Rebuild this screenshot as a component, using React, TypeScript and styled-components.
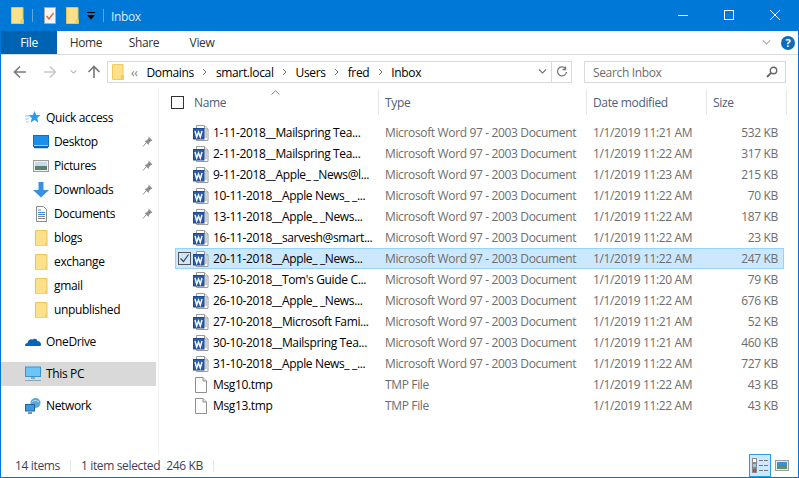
import React from "react";
import styled, { createGlobalStyle } from "styled-components";

const Global = createGlobalStyle`
  html, body { margin: 0; padding: 0; background: #fff; overflow: hidden; }
  * { box-sizing: border-box; }
`;
const Win = styled.div`
  width: 799px; height: 478px; display: flex; flex-direction: column;
  border: 1px solid #0078d7; border-top: 0; background: #fff; overflow: hidden;
  font-family: "Open Sans", "Noto Sans", sans-serif; font-size: 12px; color: #000;
  letter-spacing: -0.35px;
`;
const TitleBar = styled.div`
  height: 31px; margin: 0 -1px; background: #0078d7; display: flex; align-items: center; padding-left: 11px; flex: none;
`;
const TitleSep = styled.span`width: 1px; height: 13px; background: #5aa7e4; margin-left: 8px;`;
const TitleText = styled.span`color: #dcecf9; margin-left: 7px; margin-top: 2px; flex: 1; font-size: 12px;`;
const Qat = styled.span<{ $ml: number }>`display: inline-flex; margin-left: ${p => p.$ml}px;`;
const WinBtn = styled.span`width: 46px; height: 31px; display: flex; align-items: center; justify-content: center;`;
const Controls = styled.div`display: flex; margin-right: 1px; margin-top: -1px;`;

const Ribbon = styled.div`
  height: 24px; flex: none; border-bottom: 1px solid #dadbdc; display: flex; align-items: stretch; position: relative;
`;
const FileTab = styled.div`
  width: 56px; background: #0063b1; color: #fff; display: flex; align-items: center; justify-content: center; height: 23px;
`;
const RTab = styled.div`width: 58px; display: flex; align-items: center; justify-content: center; color: #333;`;
const RibbonRight = styled.div`margin-left: auto; display: flex; align-items: center; gap: 10px; padding-right: 3px;`;
const Help = styled.span`
  width: 14px; height: 14px; border-radius: 50%; background: #0f6cbd; color: #fff; font-weight: 700; font-size: 11px;
  display: flex; align-items: center; justify-content: center; letter-spacing: 0;
`;

const Nav = styled.div`height: 33px; flex: none; display: flex; align-items: flex-start; padding-top: 6px;`;
const NavBtns = styled.div`width: 106px; height: 22px; display: flex; align-items: center; padding-left: 12px;`;
const NavGap = styled.span<{ $w: number }>`display: inline-flex; margin-right: ${p => p.$w}px;`;
const Address = styled.div`
  width: 465px; height: 22px; border: 1px solid #d9d9d9; display: flex; align-items: center; padding-left: 4px;
`;
const Crumb = styled.span`margin-left: 6px; margin-right: 6px;`;
const Back = styled.span`color: #777; margin-left: 7px; margin-right: 3px;`;
const CrumbSep = styled.span`display: inline-flex; margin: 0 2.5px;`;
const AddrEnd = styled.div`margin-left: auto; display: flex; align-items: center; height: 100%;`;
const AddrDown = styled.span`display: flex; width: 14px; justify-content: center; margin-right: 2px;`;
const Refresh = styled.span`width: 20px; height: 100%; border-left: 1px solid #d9d9d9; display: flex; align-items: center; justify-content: center;`;
const Search = styled.div`
  width: 202px; height: 22px; margin-left: 12px; border: 1px solid #d9d9d9; display: flex; align-items: center;
  justify-content: space-between; padding: 0 7px 0 8px; color: #6d6d6d;
`;

const Body = styled.div`flex: 1; min-height: 0; display: flex;`;
const Side = styled.nav`
  width: 158px; flex: none; border-right: 1px solid #f0f0f0; padding-top: 18px; display: flex; flex-direction: column;
`;
const SideItem = styled.div<{ $level?: number; $active?: boolean; $gap?: boolean }>`
  height: 24px; flex: none; width: 155px; display: flex; align-items: center; position: relative;
  padding-left: ${p => (p.$level === 2 ? 32 : 24)}px; padding-bottom: 1px;
  margin-top: ${p => (p.$gap ? 8 : 0)}px;
  background: ${p => (p.$active ? "#d9d9d9" : "transparent")};
`;
const SideIcon = styled.span`width: 16px; height: 16px; display: inline-flex; margin-right: 5px; flex: none;`;
const Pin = styled.span`position: absolute; right: 3px; top: 6px; display: flex;`;

const Main = styled.main`flex: 1; min-width: 0; display: flex; flex-direction: column;`;
const Head = styled.div`
  height: 28px; flex: none; margin-left: 6px; display: grid; grid-template-columns: 214px 208px 120px 80px; padding-top: 2px; margin-bottom: 6px;
`;
const HeadCell = styled.div`
  height: 25px; border-right: 1px solid #e5e5e5; display: flex; align-items: center; padding-left: 6px; color: #4c607a; position: relative;
`;
const Caret = styled.span`position: absolute; left: 106px; top: 0; display: flex;`;
const Box = styled.span<{ $dark?: boolean }>`
  width: 13px; height: 13px; flex: none; border: 1px solid ${p => (p.$dark ? "#333" : "#555")}; display: flex; align-items: center; justify-content: center;
`;
const HeadLabel = styled.span`margin-left: 10px;`;
const Rows = styled.div`margin-left: 16px; width: 609px;`;
const Row = styled.div<{ $sel?: boolean }>`
  height: 21px; display: grid; grid-template-columns: 204px 208px 120px 77px; align-items: center;
  background: ${p => (p.$sel ? "#cce8ff" : "transparent")};
  box-shadow: ${p => (p.$sel ? "inset 0 0 0 1px #99d1ff" : "none")};
`;
const NameCell = styled.div`display: flex; align-items: center; padding-left: 3px; white-space: nowrap;`;
const Check = styled.span`width: 15px; flex: none; display: flex;`;
const FileIcon = styled.span`width: 16px; height: 16px; flex: none; display: flex; margin-right: 4px;`;
const Cell = styled.div`padding-left: 6px; color: #6d6d6d; white-space: nowrap;`;
const SizeCell = styled(Cell)`text-align: right; padding-right: 6px;`;

const Status = styled.footer`height: 23px; flex: none; display: flex; align-items: center; position: relative; padding-left: 14px; color: #3d3d5c;`;
const StatusSep = styled.span`width: 1px; height: 12px; background: #e6e6e6; margin: 0 10px;`;
const StatusGap = styled.span`margin-left: 6px;`;
const ViewBtns = styled.div`margin-left: auto; display: flex; align-items: center; height: 100%; padding-right: 9px;`;
const ViewOn = styled.span`width: 22px; height: 23px; background: #cce8ff; border: 1px solid #26a0da; display: flex; align-items: center; justify-content: center; margin-right: 4px;`;

const Folder = ({ w = 13, h = 17 }: { w?: number; h?: number }) => (
  <svg width={w} height={h} viewBox="0 0 13 17">
    <path d="M.5.5h11.5v16H.5z" fill="#fde08a" stroke="#eac54f" />
    <path d="M10 12.5h2.5v4H10z" fill="#f5d25e" stroke="#eac54f" strokeWidth=".7" />
  </svg>
);
const SideFolder = () => (
  <svg width="16" height="16" viewBox="0 0 16 16">
    <path d="M2.5.5h11.5v15.5H2.5z" fill="#fde08a" stroke="#eac54f" />
    <path d="M12 12.5h2v3.5h-2z" fill="#f5d25e" />
  </svg>
);
const Word = () => (
  <svg width="16" height="16" viewBox="0 0 16 16">
    <path d="M3.5.5h8l3.5 3.500v11.500h-11.500z" fill="#fff" stroke="#9a9a9a" />
    <path d="M11.500.5v3.500h3.500" fill="#eee" stroke="#9a9a9a" />
    <path d="M11.500 6h2.500M11.500 8h2.500M11.500 10h2.500M11.500 12h2.500" stroke="#9a9a9a" />
    <rect x="0.500" y="3.500" width="10.500" height="10.500" fill="#2a5ca8" stroke="#1c4a92" />
    <path d="M2 6l1.700 6 1.800-5 1.800 5L9 6" fill="none" stroke="#fff" strokeWidth="1.400" />
  </svg>
);
const Tmp = () => (
  <svg width="16" height="16" viewBox="0 0 16 16">
    <path d="M2.500.5h7.500l3.500 3.500v11.500h-11z" fill="#fdfdfd" stroke="#8f8f8f" />
    <path d="M10 .5v3.500h3.500" fill="#e8e8e8" stroke="#8f8f8f" />
  </svg>
);
const Tick = ({ s = 11, c = "#444" }: { s?: number; c?: string }) => (
  <svg width={s} height={s} viewBox="0 0 11 11"><path d="M1.500 5.500l3 3 5-7" fill="none" stroke={c} strokeWidth="1.200" /></svg>
);
const PinIcon = () => (
  <svg width="11" height="11" viewBox="0 0 11 11">
    <path d="M6.500.5l4 4-1.500.5-2 2-.5 2L2.500 5l2-.5 2-2z" fill="#8c8c8c" />
    <path d="M4 7l-3 3.500" stroke="#8c8c8c" />
  </svg>
);
const Arrow = ({ c, rot = 0 }: { c: string; rot?: number }) => (
  <svg width="14" height="14" viewBox="0 0 14 14" style={{ transform: `rotate(${rot}deg)` }}>
    <path d="M13 7H2M7 1.500L1.500 7 7 12.500" fill="none" stroke={c} strokeWidth="1.600" />
  </svg>
);
const Chevron = ({ c = "#777", w = 8 }: { c?: string; w?: number }) => (
  <svg width={w} height={w * 0.6} viewBox="0 0 10 6"><path d="M1 .5l4 4 4-4" fill="none" stroke={c} strokeWidth="1.300" /></svg>
);
const CrumbArrow = () => (
  <CrumbSep><svg width="5" height="8" viewBox="0 0 5 8"><path d="M1 1l3 3-3 3" fill="none" stroke="#777" /></svg></CrumbSep>
);

const Star = () => (
  <svg width="16" height="16" viewBox="0 0 16 16">
    <path d="M9.500 1l1.700 4 4.300.3-3.300 2.800 1.100 4.400-3.800-2.400-3.800 2.400 1.100-4.400L3.500 5.300 7.800 5z" fill="#2f9be8" />
    <path d="M0 6h4M.5 9h3M1.500 12h2" stroke="#7cc3f3" />
  </svg>
);
const Desktop = () => (
  <svg width="16" height="14" viewBox="0 0 16 14" style={{ marginTop: 1 }}>
    <rect x=".5" y=".5" width="15" height="11" fill="#1b90e6" stroke="#0f6fc0" />
    <path d="M1 12.500h14" stroke="#0b5fa8" strokeWidth="1.500" />
    <path d="M1 10.500h14" stroke="#8fd0fa" />
  </svg>
);
const Pict = () => (
  <svg width="16" height="12" viewBox="0 0 16 12" style={{ marginTop: 2 }}>
    <rect x=".5" y=".5" width="15" height="11" fill="#eef3f6" stroke="#9b9b9b" />
    <rect x="2" y="2" width="12" height="4" fill="#c6dbe8" />
    <rect x="2" y="6" width="12" height="4" fill="#5d7f6d" />
  </svg>
);
const Down = () => (
  <svg width="16" height="16" viewBox="0 0 16 16"><path d="M5.500 0h5v8H16l-8 7.500L0 8h5.500z" fill="#3b8fe0" /></svg>
);
const Docs = () => (
  <svg width="16" height="16" viewBox="0 0 16 16">
    <path d="M3.500.5h7l3 3v12h-10z" fill="#fff" stroke="#8a8a8a" />
    <path d="M5 4h3M5 6.500h7M5 8.500h7" stroke="#3b8fe0" />
    <path d="M5 10.500h7M5 12.500h7" stroke="#888" />
  </svg>
);
const Cloud = () => (
  <svg width="16" height="16" viewBox="0 0 16 16"><path d="M0 12c0-2 1-3 2.500-3C3 6 5.500 4.500 7.500 5.500 9 4 12 4.500 12.500 7c2 0 3.500 1.500 3.500 3.500 0 1-.5 1.500-1.500 1.500z" fill="#0a64b4" /></svg>
);
const PC = () => (
  <svg width="16" height="16" viewBox="0 0 16 16">
    <rect x=".5" y="1" width="15" height="9.500" fill="#6cc6f5" stroke="#3d93cc" />
    <path d="M6 12h4" stroke="#8aa" strokeWidth="2" />
    <path d="M0 14.500h16" stroke="#8fa3b3" />
  </svg>
);
const Net = () => (
  <svg width="16" height="16" viewBox="0 0 16 16">
    <circle cx="10.500" cy="5" r="5" fill="#5da5d6" />
    <path d="M7 4c2-2 5-2 7 0" stroke="#d5e8f5" fill="none" />
    <rect x=".5" y="6.500" width="9" height="6.500" fill="#3d9ae0" stroke="#22679d" />
    <path d="M3 15h4" stroke="#667" strokeWidth="1.500" />
  </svg>
);

const type = "Microsoft Word 97 - 2003 Document";
const files = [
  ["1-11-2018__Mailspring Tea...", "1/1/2019 11:21 AM", "532 KB"],
  ["2-11-2018__Mailspring Tea...", "1/1/2019 11:22 AM", "317 KB"],
  ["9-11-2018__Apple_ _News@l...", "1/1/2019 11:23 AM", "215 KB"],
  ["10-11-2018__Apple News_ _...", "1/1/2019 11:22 AM", "70 KB"],
  ["13-11-2018__Apple_ _News...", "1/1/2019 11:22 AM", "187 KB"],
  ["16-11-2018__sarvesh@smart...", "1/1/2019 11:22 AM", "23 KB"],
  ["20-11-2018__Apple_ _News...", "1/1/2019 11:22 AM", "247 KB"],
  ["25-10-2018__Tom's Guide C...", "1/1/2019 11:20 AM", "79 KB"],
  ["26-10-2018__Apple_ _News...", "1/1/2019 11:22 AM", "676 KB"],
  ["27-10-2018__Microsoft Fami...", "1/1/2019 11:21 AM", "52 KB"],
  ["30-10-2018__Mailspring Tea...", "1/1/2019 11:21 AM", "460 KB"],
  ["31-10-2018__Apple News_ _...", "1/1/2019 11:22 AM", "727 KB"],
];

export default function App() {
  return (
    <Win>
      <Global />
      <TitleBar>
        <Folder />
        <TitleSep />
        <Qat $ml={11}>
          <svg width="12" height="17" viewBox="0 0 12 17">
            <path d="M.5.5h11v16H.5z" fill="#f4f4f4" stroke="#aaa" />
            <path d="M2.500 9l2.500 3 4.500-6" fill="none" stroke="#e0603a" strokeWidth="1.300" />
          </svg>
        </Qat>
        <Qat $ml={10}><Folder /></Qat>
        <Qat $ml={8}>
          <svg width="8" height="8" viewBox="0 0 8 8"><path d="M0 0h8v1H0zM0 3h8L4 7.500z" fill="#000" /></svg>
        </Qat>
        <TitleSep />
        <TitleText>Inbox</TitleText>
        <Controls>
          <WinBtn><svg width="10" height="1"><rect width="10" height="1" fill="#fff" /></svg></WinBtn>
          <WinBtn><svg width="10" height="10"><rect x=".5" y=".5" width="9" height="9" fill="none" stroke="#fff" /></svg></WinBtn>
          <WinBtn><svg width="10" height="10"><path d="M0 0l10 10M10 0L0 10" stroke="#fff" /></svg></WinBtn>
        </Controls>
      </TitleBar>
      <Ribbon>
        <FileTab>File</FileTab>
        <RTab>Home</RTab>
        <RTab>Share</RTab>
        <RTab>View</RTab>
        <RibbonRight><Chevron c="#a8a8a8" w={9} /><Help>?</Help></RibbonRight>
      </Ribbon>
      <Nav>
        <NavBtns>
          <NavGap $w={16}><Arrow c="#7a7a7a" /></NavGap>
          <NavGap $w={13}><Arrow c="#c8c8c8" rot={180} /></NavGap>
          <NavGap $w={10}><Chevron c="#888" w={7} /></NavGap>
          <NavGap $w={0}><Arrow c="#777" rot={90} /></NavGap>
        </NavBtns>
        <Address>
          <Folder w={12} h={16} />
          <Back>‹‹</Back>
          <Crumb>Domains</Crumb>
          <CrumbArrow />
          <Crumb>smart.local</Crumb>
          <CrumbArrow />
          <Crumb>Users</Crumb>
          <CrumbArrow />
          <Crumb>fred</Crumb>
          <CrumbArrow />
          <Crumb>Inbox</Crumb>
          <AddrEnd>
            <AddrDown><Chevron c="#666" w={9} /></AddrDown>
            <Refresh>
              <svg width="12" height="12" viewBox="0 0 12 12"><path d="M9.500 2.500A4.500 4.500 0 1 0 10.500 6M9.500 .5v3h-3" fill="none" stroke="#777" strokeWidth="1.300" /></svg>
            </Refresh>
          </AddrEnd>
        </Address>
        <Search>
          Search Inbox
          <svg width="12" height="12" viewBox="0 0 12 12"><circle cx="7.500" cy="4.500" r="3.200" fill="none" stroke="#666" strokeWidth="1.400" /><path d="M5 7l-4 4" stroke="#666" strokeWidth="1.800" /></svg>
        </Search>
      </Nav>
      <Body>
        <Side>
          <SideItem><SideIcon><Star /></SideIcon>Quick access</SideItem>
          <SideItem $level={2}><SideIcon><Desktop /></SideIcon>Desktop<Pin><PinIcon /></Pin></SideItem>
          <SideItem $level={2}><SideIcon><Pict /></SideIcon>Pictures<Pin><PinIcon /></Pin></SideItem>
          <SideItem $level={2}><SideIcon><Down /></SideIcon>Downloads<Pin><PinIcon /></Pin></SideItem>
          <SideItem $level={2}><SideIcon><Docs /></SideIcon>Documents<Pin><PinIcon /></Pin></SideItem>
          <SideItem $level={2}><SideIcon><SideFolder /></SideIcon>blogs</SideItem>
          <SideItem $level={2}><SideIcon><SideFolder /></SideIcon>exchange</SideItem>
          <SideItem $level={2}><SideIcon><SideFolder /></SideIcon>gmail</SideItem>
          <SideItem $level={2}><SideIcon><SideFolder /></SideIcon>unpublished</SideItem>
          <SideItem $gap><SideIcon><Cloud /></SideIcon>OneDrive</SideItem>
          <SideItem $gap $active><SideIcon><PC /></SideIcon>This PC</SideItem>
          <SideItem $gap><SideIcon><Net /></SideIcon>Network</SideItem>
        </Side>
        <Main>
          <Head>
            <HeadCell>
              <Box $dark />
              <HeadLabel>Name</HeadLabel>
              <Caret><svg width="9" height="5" viewBox="0 0 9 5"><path d="M.5 4.500l4-4 4 4" fill="none" stroke="#888" /></svg></Caret>
            </HeadCell>
            <HeadCell>Type</HeadCell>
            <HeadCell>Date modified</HeadCell>
            <HeadCell>Size</HeadCell>
          </Head>
          <Rows>
            {files.map(([n, d, s], i) => (
              <Row key={n} $sel={i === 6}>
                <NameCell>
                  <Check>{i === 6 && <Box><Tick /></Box>}</Check>
                  <FileIcon><Word /></FileIcon>
                  {n}
                </NameCell>
                <Cell>{type}</Cell>
                <Cell>{d}</Cell>
                <SizeCell>{s}</SizeCell>
              </Row>
            ))}
            {["Msg10.tmp", "Msg13.tmp"].map(n => (
              <Row key={n}>
                <NameCell>
                  <Check />
                  <FileIcon><Tmp /></FileIcon>
                  {n}
                </NameCell>
                <Cell>TMP File</Cell>
                <Cell>1/1/2019 11:22 AM</Cell>
                <SizeCell>43 KB</SizeCell>
              </Row>
            ))}
          </Rows>
        </Main>
      </Body>
      <Status>
        14 items
        <StatusSep />
        1 item selected
        <StatusGap>246 KB</StatusGap>
        <StatusSep />
        <ViewBtns>
          <ViewOn>
            <svg width="16" height="15" viewBox="0 0 16 15">
              <rect x=".5" y=".5" width="4" height="4" fill="#fff" stroke="#888" />
              <rect x=".5" y="5.500" width="4" height="4" fill="#9cc4e4" stroke="#888" />
              <rect x=".5" y="10.500" width="4" height="4" fill="#c44" stroke="#888" />
              <path d="M7 2.500h4M12 2.500h4M7 7.500h4M12 7.500h4M7 12.500h4M12 12.500h4" stroke="#777" />
            </svg>
          </ViewOn>
          <svg width="14" height="11" viewBox="0 0 14 11">
            <rect x=".5" y=".5" width="13" height="10" fill="#dfeef7" stroke="#9b9b9b" />
            <rect x="2" y="2" width="10" height="3" fill="#3d8fd0" />
            <rect x="2" y="5" width="10" height="4" fill="#5d8f6d" />
          </svg>
        </ViewBtns>
      </Status>
    </Win>
  );
}
